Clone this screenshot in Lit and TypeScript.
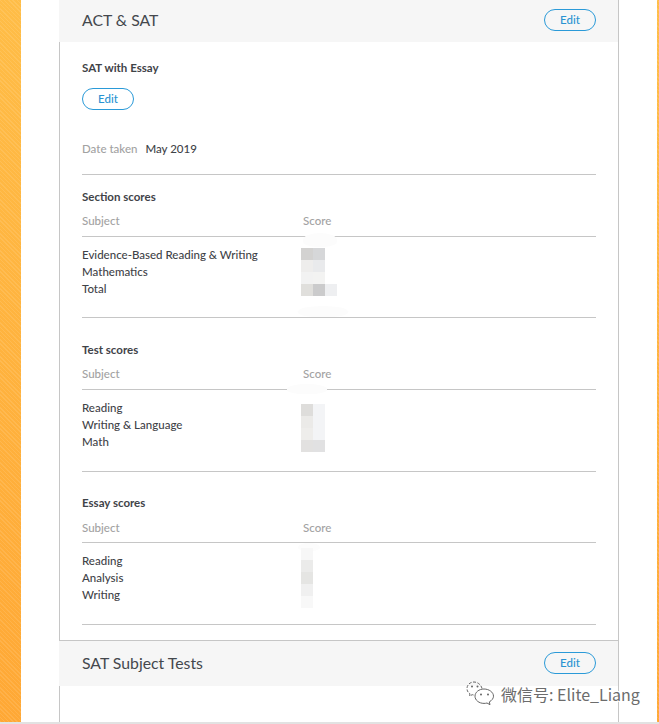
import { LitElement, html, css, svg } from "lit";
import { customElement } from "lit/decorators.js";

type Mosaic = { top: number; left: number; cells: string[][] };

const sections = [
  {
    title: "Section scores",
    rows: ["Evidence-Based Reading & Writing", "Mathematics", "Total"],
  },
  { title: "Test scores", rows: ["Reading", "Writing & Language", "Math"] },
  { title: "Essay scores", rows: ["Reading", "Analysis", "Writing"] },
];

const mosaics: Mosaic[] = [
  {
    top: 248,
    left: 301,
    cells: [
      ["#d3d2d1", "#d6d7d9"],
      ["#eeedec", "#e9eaec"],
      ["#f2f2f2", "#f3f3f2"],
      ["#e0dfdc", "#cbcbcc", "#eeeff1"],
    ],
  },
  {
    top: 404,
    left: 301,
    cells: [
      ["#dedddb", "#f3f4f6"],
      ["#ebeae8", "#f3f4f6"],
      ["#eeedeb", "#f3f4f6"],
      ["#e2e1e0", "#e1e1e2"],
    ],
  },
  {
    top: 548,
    left: 301,
    cells: [
      ["#f7f7f7"],
      ["#ebebea"],
      ["#e5e5e3"],
      ["#f0f0f0"],
      ["#f8f8f8"],
    ],
  },
];

@customElement("app-root")
export class AppRoot extends LitElement {
  static styles = css`
    :host {
      display: flex;
      position: relative;
      width: 659px;
      height: 724px;
      overflow: hidden;
      background: #fff;
      font-family: "Lato", "Noto Sans", sans-serif;
      color: #3f4348;
      box-sizing: border-box;
      border-bottom: 2px solid #e2e2e2;
    }
    .strip {
      flex: none;
      background:
        repeating-linear-gradient(45deg, rgba(255, 255, 255, 0.1) 0 1px, transparent 1px 3px),
        linear-gradient(180deg, #ffbd47 0%, #ffa835 100%);
    }
    .strip.left {
      width: 21px;
      margin-right: 38px;
    }
    .strip.right {
      width: 2px;
      margin-left: 38px;
    }
    .card {
      flex: none;
      width: 560px;
      box-sizing: border-box;
      border-left: 1px solid #c6c6c6;
      border-right: 1px solid #c6c6c6;
      display: flex;
      flex-direction: column;
    }
    .head {
      margin-left: -1px;
      background: #f6f6f6;
      display: flex;
      align-items: center;
      justify-content: space-between;
      padding: 0 22px 2px 23px;
      height: 42px;
      box-sizing: border-box;
    }
    .head.second {
      height: 46px;
      border-top: 1px solid #c6c6c6;
      margin-top: 15px;
      padding-bottom: 1px;
    }
    .head h2 {
      margin: 0 0 2px;
      font-size: 15.8px;
      font-weight: 400;
      color: #44484d;
    }
    .edit {
      box-sizing: border-box;
      width: 52px;
      height: 22px;
      border: 1px solid #2a9ad8;
      border-radius: 11px;
      color: #2a93d2;
      background: transparent;
      font: 500 11.5px "Lato", sans-serif;
      padding: 0 0 2px;
      display: block;
    }
    .body {
      padding: 0 22px;
      display: flex;
      flex-direction: column;
    }
    .test {
      margin: 17px 0 0;
      font-size: 11.5px;
      line-height: 17px;
      font-weight: 700;
    }
    .body .edit {
      margin-top: 12px;
    }
    .date {
      margin-top: 30px;
      height: 34px;
      display: flex;
      gap: 8px;
      font-size: 11.5px;
      line-height: 17px;
      font-weight: 500;
    }
    .muted {
      color: #a2a2a2;
    }
    .block {
      border-top: 1px solid #c6c6c6;
    }
    .block h3 {
      margin: 13px 0 0;
      font-size: 11.5px;
      line-height: 17px;
      font-weight: 700;
    }
    .block + .block h3 {
      margin-top: 23px;
    }
    .block + .block + .block h3 {
      margin-top: 22px;
    }
    .columns,
    .row {
      display: grid;
      grid-template-columns: 221px 1fr;
      font-size: 11.5px;
      line-height: 17px;
    }
    .columns {
      margin-top: 7px;
      padding-bottom: 7px;
      border-bottom: 1px solid #c6c6c6;
      font-weight: 500;
      color: #a2a2a2;
    }
    .block + .block + .block .columns {
      margin-top: 8px;
      padding-bottom: 6px;
    }
    .rows {
      padding: 9px 0 20px;
      font-weight: 500;
    }
    .block + .block .rows {
      padding-bottom: 21px;
    }
    .closing {
      border-top: 1px solid #c6c6c6;
    }
    .mosaic {
      position: absolute;
      display: flex;
      flex-direction: column;
    }
    .mosaic-row {
      display: flex;
    }
    .cell {
      width: 12px;
      height: 12px;
    }
    .smear {
      position: absolute;
      background: #fcfcfc;
      border-radius: 50% 50% 40% 40%;
    }
    .mark {
      position: absolute;
      left: 466px;
      top: 680px;
      display: flex;
      align-items: center;
      gap: 6px;
      color: #6c6c6c;
      font: 16px "Noto Sans CJK SC", "Noto Sans", sans-serif;
      text-shadow: 1px 1px 0 #fff, -1px -1px 0 #fff, 1px -1px 0 #fff, -1px 1px 0 #fff;
      white-space: nowrap;
    }
    .mark svg {
      display: block;
    }
  `;

  private wechat() {
    return svg`<svg width="29" height="27" viewBox="0 0 29 27" fill="none" stroke="#666" stroke-width="1">
      <path d="M16 8.500C15 4.500 11.500 2 8 2 4 2 1 5 1 8.500c0 2.300 1 4 3 5.300L3.500 16l2.800-1.300c1 .3 1.700 .4 2.700 .4" stroke-dasharray="3 1.500"/>
      <path d="M18 9c-5 0-9 3.200-9 7.200s4 7.200 9 7.200c1 0 2-.1 3-.4l3 1.700-.7-2.800c2.500-1.400 4.200-3.500 4.200-5.700C27.500 12.200 23 9 18 9z"/>
      <circle cx="15" cy="14.500" r="1" fill="#666" stroke="none"/>
      <circle cx="22" cy="14.500" r="1" fill="#666" stroke="none"/>
      <circle cx="6" cy="6.500" r="1" fill="#666" stroke="none"/>
      <circle cx="11.500" cy="6.500" r="1" fill="#666" stroke="none"/>
    </svg>`;
  }

  render() {
    return html`
      <div class="strip left"></div>
      <main class="card">
        <header class="head">
          <h2>ACT &amp; SAT</h2>
          <button class="edit">Edit</button>
        </header>
        <div class="body">
          <p class="test">SAT with Essay</p>
          <button class="edit">Edit</button>
          <div class="date"><span class="muted">Date taken</span><span>May 2019</span></div>
          ${sections.map(
            (s) => html`
              <section class="block">
                <h3>${s.title}</h3>
                <div class="columns"><span>Subject</span><span>Score</span></div>
                <div class="rows">
                  ${s.rows.map((r) => html`<div class="row"><span>${r}</span></div>`)}
                </div>
              </section>
            `
          )}
          <div class="closing"></div>
        </div>
        <header class="head second">
          <h2>SAT Subject Tests</h2>
          <button class="edit">Edit</button>
        </header>
      </main>
      <div class="strip right"></div>
      <div class="smear" style="left:303px;top:233px;width:34px;height:14px"></div>
      <div class="smear" style="left:298px;top:306px;width:50px;height:11px"></div>
      <div class="smear" style="left:287px;top:384px;width:40px;height:10px"></div>
      <div class="smear" style="left:298px;top:543px;width:22px;height:8px"></div>
      ${mosaics.map(
        (m) => html`
          <div class="mosaic" style="top:${m.top}px;left:${m.left}px">
            ${m.cells.map(
              (row) => html`<div class="mosaic-row">
                ${row.map((c) => html`<div class="cell" style="background:${c}"></div>`)}
              </div>`
            )}
          </div>
        `
      )}
      <div class="mark">${this.wechat()}<span>微信号: Elite_Liang</span></div>
    `;
  }
}
